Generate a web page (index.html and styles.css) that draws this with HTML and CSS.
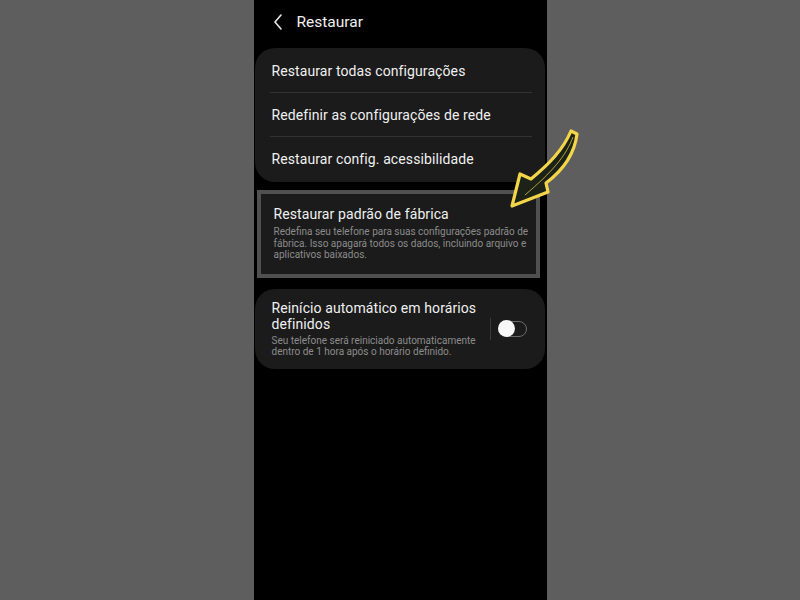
FILE: index.html
```html
<!DOCTYPE html>
<html lang="pt-BR">
<head>
    <meta charset="UTF-8">
    <meta name="viewport" content="width=device-width, initial-scale=1.0">
    <title>Restaurar</title>
    <link rel="stylesheet" href="styles.css">
</head>
<body>
    <div class="phone">
        <div class="topbar">
            <svg class="back" width="10" height="16" viewBox="0 0 10 16">
                <polyline points="8,1 2,8 8,15" fill="none" stroke="#e8e8e8" stroke-width="1.6" stroke-linecap="round" stroke-linejoin="round"/>
            </svg>
            <span class="title">Restaurar</span>
        </div>

        <div class="card list">
            <div class="row">Restaurar todas configurações</div>
            <div class="row">Redefinir as configurações de rede</div>
            <div class="row">Restaurar config. acessibilidade</div>
        </div>

        <div class="card marked">
            <div class="item-title">Restaurar padrão de fábrica</div>
            <div class="item-sub">Redefina seu telefone para suas configurações padrão de fábrica. Isso apagará todos os dados, incluindo arquivo e aplicativos baixados.</div>
        </div>

        <div class="card switch-card">
            <div class="switch-text">
                <div class="item-title">Reinício automático em horários definidos</div>
                <div class="item-sub">Seu telefone será reiniciado automaticamente dentro de 1 hora após o horário definido.</div>
            </div>
            <div class="sep"></div>
            <div class="toggle"><span class="knob"></span></div>
        </div>
    </div>

    <!-- seta desenhada à mão apontando para o item -->
    <svg class="arrow" width="800" height="600" viewBox="0 0 800 600">
        <path d="M571 131 L577 134 C575 150 566 168 546 183 L548 192 L512 206 L520 174 L531 179 C549 164 563 150 571 131 Z"
              fill="#1c2218" stroke="#f3d54a" stroke-width="3.2" stroke-linejoin="round"/>
        <path d="M573 137 C566 156 552 172 525 195" fill="none" stroke="#f3d54a" stroke-width="1" opacity="0.7"/>
    </svg>
</body>
</html>
```

FILE: styles.css
```css
body {
    margin: 0;
    background: #5e5e5e;
    font-family: Roboto, "Noto Sans", sans-serif;
    color: #f0f0f0;
}
.phone {
    width: 293px;
    height: 600px;
    margin: 0 auto;
    background: #000;
    display: flex;
    flex-direction: column;
    box-sizing: border-box;
    padding: 0 2px 0 1px;
}
.topbar {
    height: 44px;
    display: flex;
    align-items: center;
    padding-left: 18px;
    gap: 14px;
}
.title {
    font-size: 15.5px;
}
.card {
    background: #1b1b1b;
    border-radius: 20px;
}
.list {
    margin-top: 4px;
    padding: 1px 13px 2px 15px;
}
.row {
    height: 43px;
    display: flex;
    align-items: center;
    padding-left: 2px;
    font-size: 14px;
    letter-spacing: 0.1px;
    border-bottom: 1px solid #323232;
}
.row:last-child {
    border-bottom: none;
}
.marked {
    margin: 8px 5px 0 2px;
    border-radius: 0;
    border: 4px solid #505050;
    padding: 11px 5px 13px 13px;
}
.item-title {
    font-size: 14px;
    line-height: 16px;
    letter-spacing: 0.1px;
}
.item-sub {
    font-size: 10px;
    line-height: 11.5px;
    color: #8c8c8c;
    margin-top: 3px;
}
.marked .item-title {
    line-height: 18px;
}
.switch-card {
    margin-top: 11px;
    padding: 11px 18px 11px 17px;
    display: flex;
    align-items: center;
}
.switch-text {
    width: 216px;
}
.sep {
    width: 1px;
    height: 22px;
    background: #3a3a3a;
    margin: 0 8px 0 2px;
}
.toggle {
    position: relative;
    width: 26px;
    height: 14px;
    border: 1.5px solid #6a6a6a;
    border-radius: 9px;
}
.knob {
    position: absolute;
    left: -2px;
    top: -2px;
    width: 17px;
    height: 17px;
    border-radius: 50%;
    background: #f7f7f7;
}
.arrow {
    position: absolute;
    left: 0;
    top: 0;
    pointer-events: none;
}
```
